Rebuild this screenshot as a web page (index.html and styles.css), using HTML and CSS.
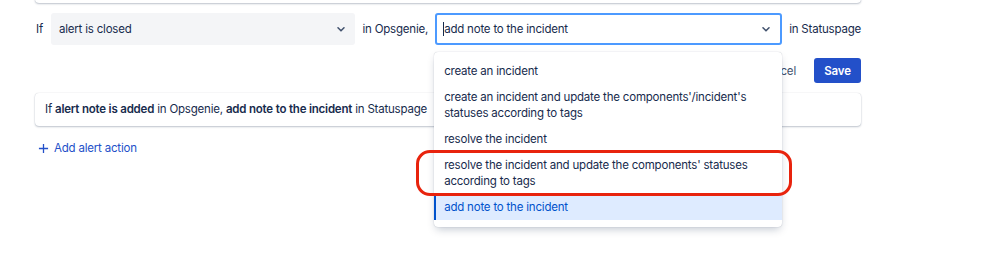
FILE: index.html
```html
<!DOCTYPE html>
<html lang="en">
<head>
    <meta charset="UTF-8">
    <title>Statuspage integration rules</title>
    <link rel="stylesheet" href="styles.css">
</head>
<body>
    <div class="page">
        <!-- previous rule (scrolled off) -->
        <div class="card prev-card"></div>

        <!-- Rule being edited -->
        <div class="rule-edit">
            <div class="cond-row">
                <span class="word">If</span>
                <div class="select trigger">
                    <span>alert is closed</span>
                    <svg class="chevron" viewBox="0 0 10 10"><path d="M2.5 4 L5 6.5 L7.5 4" /></svg>
                </div>
                <span class="word">in Opsgenie,</span>
                <div class="select-wrap">
                    <div class="select action focused">
                        <span class="caret"></span><span>add note to the incident</span>
                        <svg class="chevron" viewBox="0 0 10 10"><path d="M2.5 4 L5 6.5 L7.5 4" /></svg>
                    </div>
                    <ul class="menu">
                        <li>create an incident</li>
                        <li>create an incident and update the components'/incident's statuses according to tags</li>
                        <li>resolve the incident</li>
                        <li class="marked">resolve the incident and update the components' statuses according to tags</li>
                        <li class="selected">add note to the incident</li>
                    </ul>
                </div>
                <span class="word">in Statuspage</span>
            </div>
            <div class="buttons">
                <button class="btn cancel">Cancel</button>
                <button class="btn save">Save</button>
            </div>
        </div>

        <!-- Saved rule -->
        <div class="card rule">
            If <b>alert note is added</b> in Opsgenie, <b>add note to the incident</b> in Statuspage
        </div>

        <button class="add-action">
            <svg viewBox="0 0 12 12"><path d="M6 1 V11 M1 6 H11" /></svg>
            Add alert action
        </button>
    </div>
</body>
</html>
```

FILE: styles.css
```css
* {
    margin: 0;
    padding: 0;
    box-sizing: border-box;
}

html, body {
    height: 100%;
}

body {
    font-family: 'Inter', 'Noto Sans', sans-serif;
    font-size: 11.5px;
    letter-spacing: -0.2px;
    color: #172b4d;
    background: #fff;
    min-height: 258px;
}

.page {
    width: 826px;
    margin-left: 35px;
}

.card {
    background: #fff;
    border-radius: 4px;
    box-shadow: 0 1px 2px rgba(9, 30, 66, 0.25), 0 0 1px rgba(9, 30, 66, 0.2);
}

.prev-card {
    height: 20px;
    margin-top: -17px;
}

/* Edit row */
.rule-edit {
    padding-top: 10px;
}

.cond-row {
    display: flex;
    align-items: center;
    gap: 7px;
    height: 32px;
}

.word {
    white-space: nowrap;
}

.cond-row .word:first-child {
    margin-left: 1px;
    margin-right: 1px;
}

.select {
    display: flex;
    align-items: center;
    height: 32px;
    border-radius: 3px;
    padding: 0 8px;
}

.select .chevron {
    width: 12px;
    height: 12px;
    margin-left: auto;
    fill: none;
    stroke: #42526e;
    stroke-width: 1.3;
    stroke-linecap: round;
    stroke-linejoin: round;
}

.trigger {
    width: 307px;
    background: #f4f5f7;
}

.select-wrap {
    position: relative;
}

.action {
    width: 347px;
    background: #fff;
    border: 2px solid #4c9aff;
    padding: 0 8px 0 6px;
}

.caret {
    width: 1px;
    height: 14px;
    background: #172b4d;
}

.menu {
    position: absolute;
    top: 39px;
    left: -1px;
    width: 348px;
    list-style: none;
    background: #fff;
    border-radius: 4px;
    box-shadow: 0 4px 8px -2px rgba(9, 30, 66, 0.25), 0 0 1px rgba(9, 30, 66, 0.31);
    padding: 6px 0 7px;
    z-index: 2;
}

.menu li {
    padding: 5px 28px 5px 10px;
    line-height: 16px;
    color: #172b4d;
}

.menu li.marked {
    position: relative;
}

.menu li.marked::after {
    content: "";
    position: absolute;
    left: -18px;
    right: -10px;
    top: -2px;
    bottom: -2px;
    border: 3px solid #e8230d;
    border-radius: 14px;
}

.menu li.selected {
    background: #deebff;
    border-left: 2px solid #0052cc;
    padding-left: 8px;
    color: #0052cc;
}

/* Buttons */
.buttons {
    display: flex;
    justify-content: flex-end;
    gap: 8px;
    margin-top: 13px;
}

.btn {
    font-family: inherit;
    font-size: 11.5px;
    letter-spacing: -0.1px;
    border: none;
    border-radius: 3px;
    height: 25px;
    padding: 0 10px;
    cursor: pointer;
}

.cancel {
    background: none;
    color: #42526e;
}

.save {
    background: #2350c9;
    color: #fff;
    font-weight: 600;
}

/* Saved rule */
.rule {
    margin-top: 10px;
    height: 33px;
    line-height: 33px;
    padding-left: 10px;
    white-space: nowrap;
}

.rule b {
    font-weight: 600;
}

.add-action {
    display: flex;
    align-items: center;
    gap: 5px;
    margin-top: 15px;
    margin-left: 3px;
    background: none;
    border: none;
    font-family: inherit;
    font-size: 11.5px;
    letter-spacing: -0.2px;
    color: #2350c9;
    cursor: pointer;
}

.add-action svg {
    width: 11px;
    height: 11px;
    fill: none;
    stroke: #2350c9;
    stroke-width: 1.4;
}
```
